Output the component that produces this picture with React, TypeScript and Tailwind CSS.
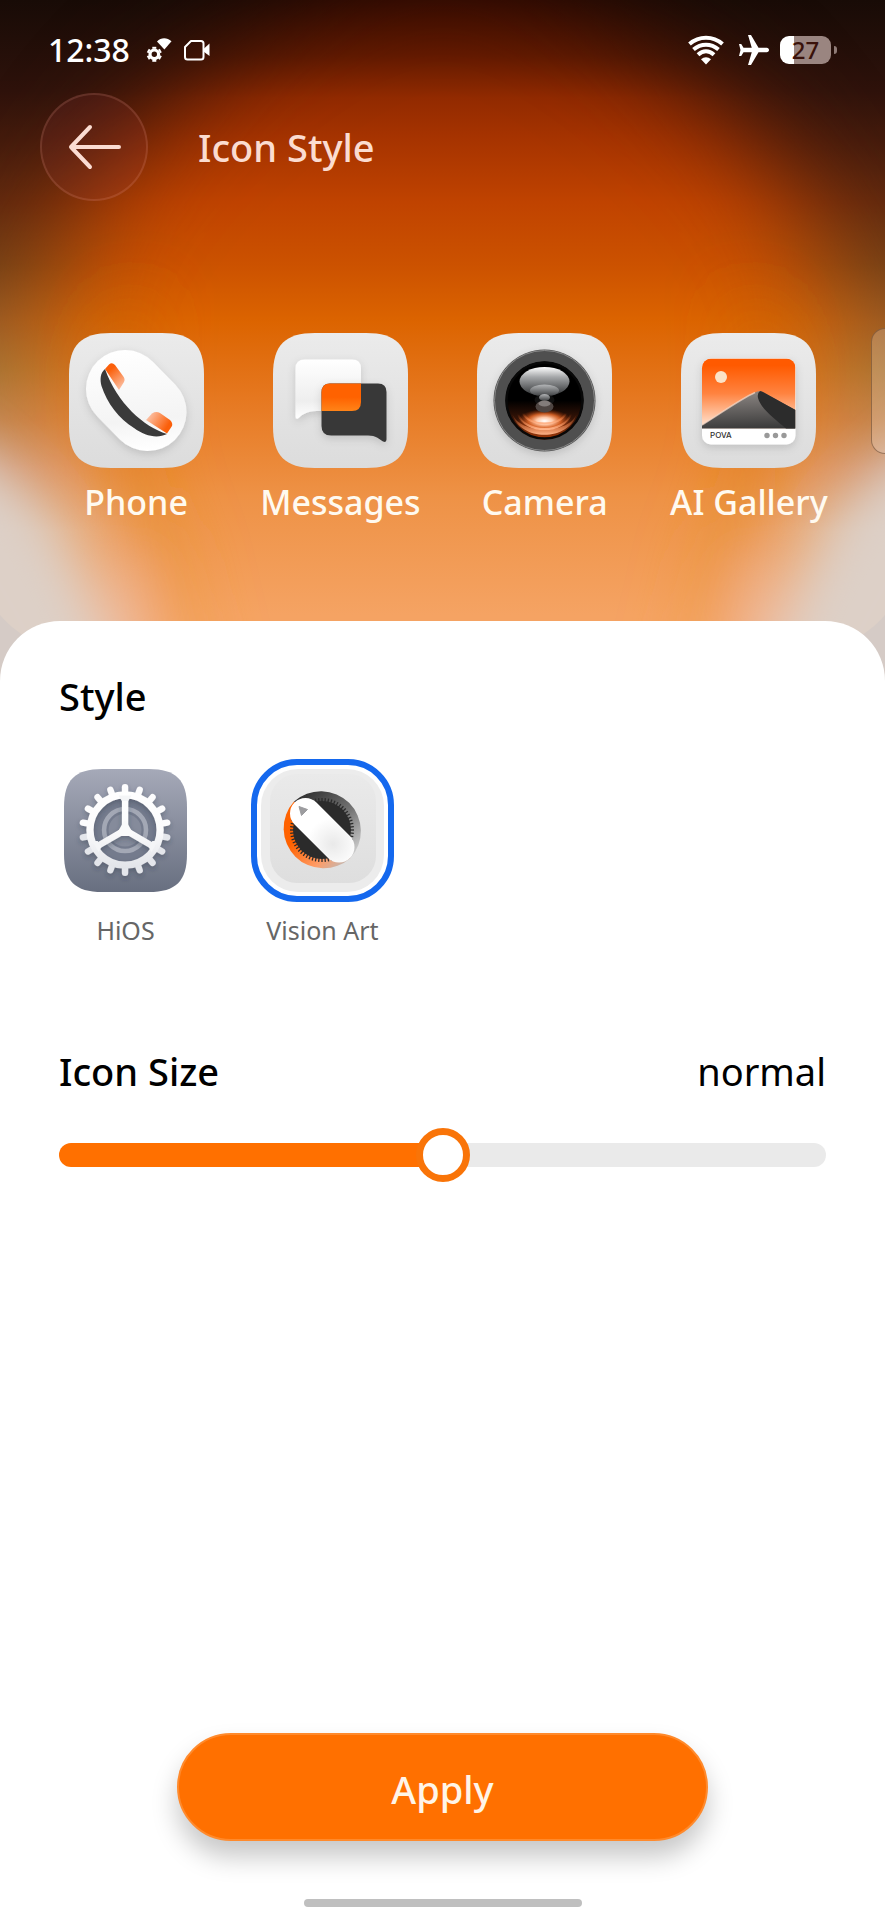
import React, { useState } from "react";
import { MdAirplanemodeActive } from "react-icons/md";

const TILE_PATH =
  "M42 0H93C123 0 135 12 135 42V93C135 123 123 135 93 135H42C12 135 0 123 0 93V42C0 12 12 0 42 0Z";

const GEAR_TEETH = Array.from({ length: 18 }, (_, i) => i * 20);
const DIAL_TICKS = Array.from({ length: 60 }, (_, i) => i * 6);
const SIZE_NAMES = ["small", "normal", "large"];

function Wallpaper() {
  return (
    <svg
      className="absolute inset-0 h-full w-full"
      viewBox="0 0 885 700"
      preserveAspectRatio="none"
      aria-hidden="true"
    >
      <defs>
        <linearGradient id="wall-edge" x1="0" y1="0" x2="0" y2="1">
          <stop offset="0" stopColor="#180b06" />
          <stop offset="0.13" stopColor="#2e120b" />
          <stop offset="0.2" stopColor="#421a0c" />
          <stop offset="0.29" stopColor="#5e280e" />
          <stop offset="0.38" stopColor="#704018" />
          <stop offset="0.46" stopColor="#925a28" />
          <stop offset="0.53" stopColor="#a07438" />
          <stop offset="0.6" stopColor="#bc8654" />
          <stop offset="0.67" stopColor="#d0a48c" />
          <stop offset="0.76" stopColor="#dacdc4" />
          <stop offset="1" stopColor="#e8d8cf" />
        </linearGradient>
        <linearGradient id="wall-core" x1="0" y1="0" x2="0" y2="1">
          <stop offset="0" stopColor="#3c0c00" />
          <stop offset="0.08" stopColor="#641a00" />
          <stop offset="0.14" stopColor="#922a00" />
          <stop offset="0.19" stopColor="#a43200" />
          <stop offset="0.29" stopColor="#c04300" />
          <stop offset="0.38" stopColor="#cc5200" />
          <stop offset="0.46" stopColor="#dc6400" />
          <stop offset="0.57" stopColor="#e67820" />
          <stop offset="0.71" stopColor="#ee9246" />
          <stop offset="0.88" stopColor="#f5a363" />
        </linearGradient>
        <linearGradient id="wall-rim" x1="0" y1="0" x2="0" y2="1">
          <stop offset="0.1" stopColor="#a84800" stopOpacity="0" />
          <stop offset="0.4" stopColor="#dc7a06" stopOpacity="0.5" />
          <stop offset="0.68" stopColor="#e6902c" stopOpacity="0.5" />
          <stop offset="1" stopColor="#f0a050" stopOpacity="0.3" />
        </linearGradient>
        <filter id="blur-wide" x="-50%" y="-50%" width="200%" height="200%">
          <feGaussianBlur stdDeviation="56" />
        </filter>
        <filter id="blur-mid" x="-50%" y="-50%" width="200%" height="200%">
          <feGaussianBlur stdDeviation="26" />
        </filter>
        <mask id="core-mask" maskUnits="userSpaceOnUse" x="0" y="0" width="885" height="700">
          <path
            d="M443 -60C570 -40 720 80 795 200C860 310 850 410 815 520L750 860H135L70 520C35 410 25 310 90 200C165 80 315 -40 443 -60Z"
            fill="#fff"
            filter="url(#blur-wide)"
          />
        </mask>
      </defs>
      <rect width="885" height="700" fill="url(#wall-edge)" />
      <rect width="885" height="700" fill="url(#wall-core)" mask="url(#core-mask)" />
      <g filter="url(#blur-mid)">
        <path d="M120 220C70 320 80 430 150 560L180 700H230L190 540C140 430 150 330 200 230Z" fill="url(#wall-rim)" />
        <path d="M765 220C815 320 805 430 735 560L705 700H655L695 540C745 430 735 330 685 230Z" fill="url(#wall-rim)" />
        <path d="M-80 420C-10 460 70 520 140 760H-80Z" fill="#ddd0c7" />
        <path d="M965 420C895 460 815 520 745 760H965Z" fill="#ddd0c7" />
        <path d="M100 570L130 565L160 740H120Z" fill="#ecc0b2" opacity="0.6" />
        <path d="M785 570L755 565L725 740H765Z" fill="#ecc0b2" opacity="0.6" />
      </g>
      <path d="M0 616C10 628 22 636 34 643L0 700Z" fill="#d5cbc6" />
      <path d="M885 616C875 628 863 636 851 643L885 700Z" fill="#d5cbc6" />
    </svg>
  );
}

function StatusBar() {
  return (
    <div className="flex h-[100px] items-center justify-between pr-12 pl-12 text-white">
      <div className="flex items-center">
        <span className="text-[32px] leading-10 font-medium">12:38</span>
        <svg className="ml-4 h-[26px] w-[26px]" viewBox="0 0 26 26" fill="none" aria-hidden="true">
          <path d="M11 4.500C15 .3 21 .3 25.500 4.200L18.400 12.500Z" fill="#fff" />
          <circle cx="8.300" cy="17.300" r="4.300" stroke="#fff" strokeWidth="3.200" />
          {[0, 60, 120, 180, 240, 300].map((angle) => (
            <path
              key={angle}
              d="M8.300 11.800V9.800"
              stroke="#fff"
              strokeWidth="4"
              transform={`rotate(${angle} 8.300 17.300)`}
            />
          ))}
        </svg>
        <svg className="ml-3 h-[22px] w-[26px]" viewBox="0 0 26 22" fill="none" aria-hidden="true">
          <path
            d="M7 2H17C18.500 2 19.500 3 19.500 4.500V18C19.500 19.500 18.500 20.500 17 20.500H3.500C2 20.500 1 19.500 1 18V8Z"
            stroke="#fff"
            strokeWidth="2"
            strokeLinejoin="round"
          />
          <path d="M19.500 10L25.500 4.500V17L19.500 12.500Z" fill="#fff" />
        </svg>
      </div>
      <div className="flex items-center">
        <svg className="h-[30px] w-9" viewBox="0 0 36 30" fill="none" stroke="#fff" strokeWidth="4" aria-hidden="true">
          <path d="M1.500 9C11 .6 25 .6 34.500 9" />
          <path d="M5.500 14.500C13 8 23 8 30.500 14.500" />
          <path d="M10 19.800C15 15.200 21 15.200 26 19.800" />
          <path d="M13 24.300C16 21.500 20 21.500 23 24.300L18 29.500Z" fill="#fff" stroke="none" />
        </svg>
        <MdAirplanemodeActive className="ml-3 h-9 w-9 rotate-90" />
        <div className="ml-2 flex items-center gap-[3px]">
          <div className="flex h-7 w-[51px] items-center justify-center rounded-[9px] bg-[linear-gradient(90deg,#fff_27%,#9a8580_27%)] text-[24px] leading-7 font-medium text-[#3a120a]">
            27
          </div>
          <span className="h-2 w-[3px] rounded-r-full bg-[#8f7b76]" />
        </div>
      </div>
    </div>
  );
}

function Tile({ id }: { id: string }) {
  return (
    <>
      <defs>
        <linearGradient id={`${id}-tile`} x1="0" y1="0" x2="0" y2="1">
          <stop offset="0" stopColor="#ebebeb" />
          <stop offset="1" stopColor="#dcdcdc" />
        </linearGradient>
        <filter id={`${id}-shadow`} filterUnits="userSpaceOnUse" x="0" y="0" width="135" height="135">
          <feDropShadow dx="0" dy="3" stdDeviation="4" floodColor="#000" floodOpacity="0.14" />
        </filter>
      </defs>
      <path d={TILE_PATH} fill={`url(#${id}-tile)`} />
    </>
  );
}

function PhoneIcon() {
  return (
    <svg className="h-[135px] w-[135px]" viewBox="0 0 135 135" aria-hidden="true">
      <Tile id="phone" />
      <defs>
        <linearGradient id="phone-pill" gradientUnits="userSpaceOnUse" x1="60" y1="16" x2="70" y2="118">
          <stop offset="0" stopColor="#fff" />
          <stop offset="0.7" stopColor="#f4f4f4" />
          <stop offset="1" stopColor="#fff" />
        </linearGradient>
        <linearGradient id="phone-top" x1="0.2" y1="0" x2="0.8" y2="1">
          <stop offset="0.2" stopColor="#fb5f0a" />
          <stop offset="1" stopColor="#fcc3a8" />
        </linearGradient>
        <linearGradient id="phone-bottom" x1="1" y1="0.8" x2="0" y2="0.3">
          <stop offset="0.2" stopColor="#fb5f0a" />
          <stop offset="1" stopColor="#fcc3a8" />
        </linearGradient>
      </defs>
      <g filter="url(#phone-shadow)">
        <path d="M56 56L78.500 79" stroke="url(#phone-pill)" strokeWidth="78" strokeLinecap="round" />
      </g>
      <path d="M36 36L40 31.500Q43 29 46 32L54 43Q56.500 46 55 49L50 57Z" fill="url(#phone-top)" />
      <path d="M77 87L83 80.500Q87 78 91 80L101 87Q104 90 103 93L98 100.500Z" fill="url(#phone-bottom)" />
      <path
        d="M36 36C31 40 31 47 32.500 53C38 70 50 86 65 95C76 103 88 106 98 101C75 94 48 70 36 36Z"
        fill="#3a3a3a"
      />
    </svg>
  );
}

function MessagesIcon() {
  return (
    <svg className="h-[135px] w-[135px]" viewBox="0 0 135 135" aria-hidden="true">
      <Tile id="messages" />
      <defs>
        <linearGradient id="messages-white" x1="0" y1="0" x2="0" y2="1">
          <stop offset="0" stopColor="#fff" />
          <stop offset="0.7" stopColor="#eee" />
          <stop offset="1" stopColor="#fff" />
        </linearGradient>
        <linearGradient id="messages-orange" x1="0" y1="0" x2="0" y2="1">
          <stop offset="0.5" stopColor="#ff6200" />
          <stop offset="1" stopColor="#ff8418" />
        </linearGradient>
      </defs>
      <path
        filter="url(#messages-shadow)"
        d="M32 26.500H79Q88 26.500 88 35.500V69Q88 78 79 78H43C34 78 29 82 25 85.500Q22.500 86.500 22.500 83.500V35.500Q22.500 26.500 32 26.500Z"
        fill="url(#messages-white)"
      />
      <path
        filter="url(#messages-shadow)"
        d="M57 50.500H105Q113.500 50.500 113.500 59V106.500Q113.500 110 110 108.500C106 106 103 102.500 95 102.500H58Q48.500 102.500 48.500 93V59.500Q48.500 50.500 57 50.500Z"
        fill="#393939"
      />
      <path d="M57 50.500H88V69Q88 78 79 78H48.500V59.500Q48.500 50.500 57 50.500Z" fill="url(#messages-orange)" />
    </svg>
  );
}

function CameraIcon() {
  return (
    <svg className="h-[135px] w-[135px]" viewBox="0 0 135 135" fill="none" aria-hidden="true">
      <Tile id="camera" />
      <defs>
        <linearGradient id="camera-lens" x1="0" y1="0" x2="0" y2="1">
          <stop offset="0.5" stopColor="#000" />
          <stop offset="0.75" stopColor="#3a1608" />
          <stop offset="1" stopColor="#a83c0a" />
        </linearGradient>
        <radialGradient id="camera-glow">
          <stop offset="0" stopColor="#fff" />
          <stop offset="0.3" stopColor="#ffc9a8" />
          <stop offset="0.6" stopColor="#f2702c" stopOpacity="0.8" />
          <stop offset="1" stopColor="#a03000" stopOpacity="0" />
        </radialGradient>
        <linearGradient id="camera-shine" x1="0" y1="0" x2="0" y2="1">
          <stop offset="0" stopColor="#fff" />
          <stop offset="0.35" stopColor="#a4a6a8" />
          <stop offset="1" stopColor="#2c2e30" />
        </linearGradient>
        <linearGradient id="camera-shine-low" x1="0" y1="0" x2="0" y2="1">
          <stop offset="0" stopColor="#b4b6b8" />
          <stop offset="1" stopColor="#3a3c3e" />
        </linearGradient>
        <linearGradient id="camera-arc" x1="0" y1="0" x2="0" y2="1">
          <stop offset="0" stopColor="#f06018" stopOpacity="0" />
          <stop offset="1" stopColor="#ffb48a" />
        </linearGradient>
      </defs>
      <circle cx="67.500" cy="67.500" r="51" fill="#505050" filter="url(#camera-shadow)" />
      <circle cx="67.500" cy="67.500" r="50" stroke="#8b8b8b" strokeWidth="1" />
      <circle cx="67.500" cy="67.500" r="39" fill="url(#camera-lens)" />
      <circle cx="67.500" cy="67.500" r="38" stroke="#080808" strokeWidth="2.500" />
      <ellipse cx="67.500" cy="88" rx="27" ry="12" fill="url(#camera-glow)" />
      <path d="M35 80C42 109 93 109 100 80C93 102 42 102 35 80Z" fill="url(#camera-arc)" />
      <path d="M41 81C48 101 87 101 94 81" stroke="url(#camera-arc)" strokeWidth="2" />
      <path d="M46 80C52 94 83 94 89 80" stroke="url(#camera-arc)" strokeWidth="2" />
      <ellipse cx="67.500" cy="48.500" rx="25" ry="14.500" fill="url(#camera-shine)" />
      <ellipse cx="67.500" cy="57.500" rx="14.500" ry="6" fill="url(#camera-shine-low)" />
      <ellipse cx="67.500" cy="67" rx="10" ry="5.500" fill="#111" />
      <ellipse cx="67.500" cy="64.500" rx="5.500" ry="3.500" fill="url(#camera-shine-low)" />
      <ellipse cx="67.500" cy="73.500" rx="9" ry="6" fill="#4e4542" />
      <ellipse cx="67.500" cy="70.500" rx="6" ry="3" fill="#a6a2a0" opacity="0.6" />
    </svg>
  );
}

function GalleryIcon() {
  return (
    <svg className="h-[135px] w-[135px]" viewBox="0 0 135 135" aria-hidden="true">
      <Tile id="gallery" />
      <defs>
        <linearGradient id="gallery-sky" x1="0" y1="0" x2="0" y2="1">
          <stop offset="0.1" stopColor="#ff5a00" />
          <stop offset="0.5" stopColor="#ff8340" />
          <stop offset="0.95" stopColor="#ffe0cc" />
        </linearGradient>
        <linearGradient id="gallery-hill" x1="0.5" y1="0" x2="0.6" y2="1">
          <stop offset="0" stopColor="#8c8683" />
          <stop offset="1" stopColor="#3a3a3a" />
        </linearGradient>
        <clipPath id="gallery-clip">
          <rect x="21" y="25.500" width="93.500" height="86" rx="9" />
        </clipPath>
      </defs>
      <rect x="21" y="25.500" width="93.500" height="86" rx="9" fill="#fff" filter="url(#gallery-shadow)" />
      <g clipPath="url(#gallery-clip)">
        <rect x="21" y="25.500" width="93.500" height="70" fill="url(#gallery-sky)" />
        <path d="M21 92C42 79 58 67 74 59.500Q79 57 83 60L114.500 77V95.500H21Z" fill="url(#gallery-hill)" />
        <path d="M21 92C42 79 58 67 74 59.500" stroke="#f8dccb" strokeWidth="1.500" opacity="0.7" fill="none" />
        <path d="M79 58Q81 58 83 59.500L114.500 77V95.500H105C94 86 80 76 77 65Q76 60 79 58Z" fill="#2c2c2c" />
        <circle cx="40" cy="44" r="6" fill="#fbe3c8" />
      </g>
      <text x="29" y="105" fontSize="8" fontWeight="500" fontFamily="Inter, sans-serif" fill="#333">
        POVA
      </text>
      <circle cx="86" cy="102.500" r="2.700" fill="#999" />
      <circle cx="94.500" cy="102.500" r="2.700" fill="#999" />
      <circle cx="103" cy="102.500" r="2.700" fill="#999" />
    </svg>
  );
}

function HiosIcon() {
  return (
    <svg className="h-[123px] w-[123px]" viewBox="0 0 135 135" fill="none" aria-hidden="true">
      <defs>
        <linearGradient id="hios-tile" x1="0" y1="0" x2="0" y2="1">
          <stop offset="0" stopColor="#a5a9b8" />
          <stop offset="1" stopColor="#686f80" />
        </linearGradient>
        <linearGradient id="hios-gear" gradientUnits="userSpaceOnUse" x1="0" y1="16" x2="0" y2="118">
          <stop offset="0" stopColor="#fff" />
          <stop offset="0.5" stopColor="#fbfbfc" />
          <stop offset="1" stopColor="#dcdfe5" />
        </linearGradient>
        <filter id="hios-shadow" x="-20%" y="-20%" width="140%" height="140%">
          <feDropShadow dx="0" dy="3" stdDeviation="3" floodColor="#2c3344" floodOpacity="0.35" />
        </filter>
      </defs>
      <path d={TILE_PATH} fill="url(#hios-tile)" />
      <circle cx="67" cy="67" r="36" fill="#747b8d" />
      <circle cx="67" cy="67" r="23" stroke="#a3a8b5" strokeWidth="5" />
      <circle cx="67" cy="67" r="18" fill="#858b9b" />
      <g filter="url(#hios-shadow)">
        {GEAR_TEETH.map((angle) => (
          <path
            key={angle}
            d="M67 28L67 20"
            stroke={angle > 90 && angle < 270 ? "#e4e6eb" : "#fcfcfd"}
            strokeWidth="7"
            strokeLinecap="round"
            transform={`rotate(${angle} 67 67)`}
          />
        ))}
        <circle cx="67" cy="67" r="38.500" stroke="url(#hios-gear)" strokeWidth="8" />
        <path d="M67.100 30L67 67L35 85.500M67 67L99 85.500" stroke="url(#hios-gear)" strokeWidth="7" />
        <path d="M67 58L75 72H59Z" fill="#fafafb" stroke="#fafafb" strokeWidth="3" strokeLinejoin="round" />
        <path d="M60 29H74L70.500 35H63.500ZM31 79L38 91L41 86L37 79ZM103 79L96 91L93 86L97 79Z" fill="#f4f5f7" />
      </g>
    </svg>
  );
}

function VisionArtIcon() {
  return (
    <svg className="h-[123px] w-[123px]" viewBox="0 0 123 123" fill="none" aria-hidden="true">
      <defs>
        <linearGradient id="vision-inner" x1="0" y1="0" x2="0" y2="1">
          <stop offset="0" stopColor="#eaeaea" />
          <stop offset="1" stopColor="#dedede" />
        </linearGradient>
        <linearGradient id="vision-gray" gradientUnits="userSpaceOnUse" x1="45" y1="22" x2="95" y2="85">
          <stop offset="0" stopColor="#303030" />
          <stop offset="0.55" stopColor="#787878" />
          <stop offset="1" stopColor="#cfcfcf" />
        </linearGradient>
        <linearGradient id="vision-orange" gradientUnits="userSpaceOnUse" x1="25" y1="50" x2="75" y2="102">
          <stop offset="0.3" stopColor="#ff6200" />
          <stop offset="0.75" stopColor="#ff9c66" />
          <stop offset="1" stopColor="#c9b5ab" />
        </linearGradient>
        <radialGradient id="vision-knob" gradientUnits="userSpaceOnUse" cx="72" cy="75" r="26">
          <stop offset="0" stopColor="#e9e9e9" />
          <stop offset="1" stopColor="#fff" />
        </radialGradient>
      </defs>
      <rect width="123" height="123" rx="37" fill="#ececec" />
      <rect x="9" y="5" width="106" height="109" rx="27" fill="url(#vision-inner)" />
      <path d="M33 32.500A40 40 0 0 1 89.500 89Z" fill="url(#vision-gray)" />
      <path d="M33 32.500A40 40 0 0 0 89.500 89Z" fill="url(#vision-orange)" />
      <circle cx="61" cy="61" r="29" fill="#2b2b2b" />
      {DIAL_TICKS.map((angle) => (
        <path key={angle} d="M61 33V29" stroke="#2b2b2b" strokeWidth="1.300" transform={`rotate(${angle} 61 61)`} />
      ))}
      <path d="M44.500 44.500L78 78" stroke="url(#vision-knob)" strokeWidth="31" strokeLinecap="round" />
      <path d="M38 37.500L46.500 40.500L40.500 46.500Z" fill="#9c9c9f" stroke="#9c9c9f" strokeLinejoin="round" />
    </svg>
  );
}

const APPS = [
  { name: "Phone", Icon: PhoneIcon },
  { name: "Messages", Icon: MessagesIcon },
  { name: "Camera", Icon: CameraIcon },
  { name: "AI Gallery", Icon: GalleryIcon },
];

const STYLES = [
  { id: "hios", name: "HiOS", Icon: HiosIcon },
  { id: "vision", name: "Vision Art", Icon: VisionArtIcon },
];

export default function App() {
  const [style, setStyle] = useState("vision");
  const [size, setSize] = useState(1);
  const fill = (size / 2) * 100;

  return (
    <div className="relative flex min-h-screen flex-col overflow-hidden bg-white font-['Noto_Sans','Open_Sans',sans-serif]">
      {/* PREVIEW */}
      <div className="relative pb-[78px]">
        <Wallpaper />
        <div className="relative pb-24">
          <StatusBar />
          <header className="-mt-[7px] flex items-center gap-[50px] px-10">
            <button
              type="button"
              aria-label="Back"
              className="flex h-[108px] w-[108px] items-center justify-center rounded-full border-2 border-[#ffb4a0]/15 bg-[#a03c46]/15"
            >
              <svg className="h-12 w-14" viewBox="0 0 56 48" fill="none" aria-hidden="true">
                <path
                  d="M53 24H5M24 4L5 24L24 44"
                  stroke="#fbdcd2"
                  strokeWidth="4"
                  strokeLinecap="round"
                  strokeLinejoin="round"
                />
              </svg>
            </button>
            <h1 className="text-[38px] leading-[50px] font-medium text-[#fbdcd0]">Icon Style</h1>
          </header>
          <ul className="mt-[132px] grid grid-cols-4 px-[34px]">
            {APPS.map(({ name, Icon }) => (
              <li key={name} className="flex flex-col items-center">
                <Icon />
                <span className="mt-[11px] text-[34px] leading-[46px] font-medium whitespace-nowrap text-[#fffaf0]">
                  {name}
                </span>
              </li>
            ))}
          </ul>
        </div>
        <div className="absolute top-[328px] -right-4 h-[126px] w-[30px] rounded-[14px] border border-[#6b4a30]/60 bg-white/20" />
      </div>

      {/* SETTINGS SHEET */}
      <main className="relative -mt-[78px] flex grow flex-col rounded-t-[60px] bg-white pb-[13px]">
        <fieldset className="px-[54px] pt-[50px]">
          <legend className="float-left w-full px-[5px] text-[38px] leading-[50px] font-medium text-black">
            Style
          </legend>
          <div className="clear-both flex gap-[54px] pt-[38px]">
            {STYLES.map(({ id, name, Icon }) => (
              <label key={id} className="flex w-[143px] cursor-pointer flex-col items-center">
                <input
                  type="radio"
                  name="icon-style"
                  value={id}
                  checked={style === id}
                  onChange={() => setStyle(id)}
                  className="peer sr-only"
                />
                <span className="flex h-[143px] w-[143px] items-center justify-center rounded-[46px] border-[6px] border-transparent peer-checked:border-[#1468ee]">
                  <Icon />
                </span>
                <span className="mt-2 text-[25px] leading-10 whitespace-nowrap text-[#666]">{name}</span>
              </label>
            ))}
          </div>
        </fieldset>

        <section className="mt-24 px-[59px]">
          <div className="flex items-center justify-between text-[38px] leading-[50px] text-black">
            <label htmlFor="icon-size" className="font-medium">
              Icon Size
            </label>
            <output htmlFor="icon-size">{SIZE_NAMES[size]}</output>
          </div>
          <input
            id="icon-size"
            type="range"
            min={0}
            max={2}
            value={size}
            onChange={(e) => setSize(Number(e.target.value))}
            style={{ backgroundImage: `linear-gradient(90deg, #ff7000 ${fill}%, #eaeaea ${fill}%)` }}
            className="mt-[47px] block h-6 w-full cursor-pointer appearance-none rounded-full [&::-webkit-slider-thumb]:h-[54px] [&::-webkit-slider-thumb]:w-[54px] [&::-webkit-slider-thumb]:appearance-none [&::-webkit-slider-thumb]:rounded-full [&::-webkit-slider-thumb]:border-[7px] [&::-webkit-slider-thumb]:border-[#f97408] [&::-webkit-slider-thumb]:bg-white"
          />
        </section>

        <div className="mt-auto flex flex-col items-center">
          <button
            type="button"
            className="h-[108px] w-3/5 rounded-full border-2 border-[#ff8a2c] bg-[#ff7000] pt-1 text-[38px] leading-[50px] font-medium text-[#fff5e8] shadow-[0_16px_26px_rgba(0,0,0,0.22)]"
          >
            Apply
          </button>
          <span className="mt-[58px] h-2 w-[278px] rounded-full bg-[#bfbfbf]" />
        </div>
      </main>
    </div>
  );
}
